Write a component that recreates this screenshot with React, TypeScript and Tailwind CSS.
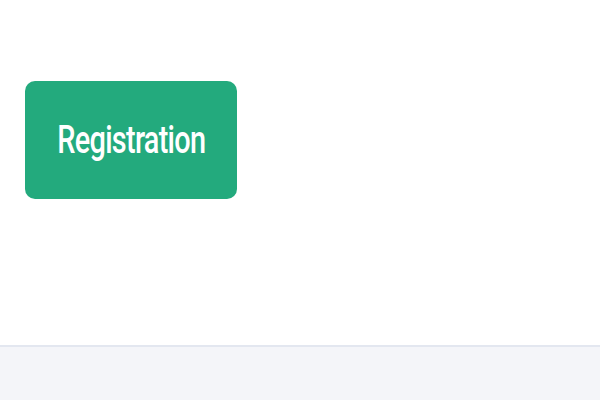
export default function App() {
  return (
    <div className="flex h-[400px] w-[600px] flex-col bg-white font-['Roboto',sans-serif]">
      <div className="flex h-[345px] flex-col">
        <div className="h-[81px]" />
        <div className="pl-[25px]">
          <button className="flex h-[118px] w-[212px] items-center justify-center rounded-[10px] bg-[#23aa7d] text-white">
            <span className="scale-x-[0.76] text-[38px] font-medium leading-none tracking-tight">
              Registration
            </span>
          </button>
        </div>
      </div>
      <div className="flex-1 border-t-2 border-[#e3e7f0] bg-[#f4f5f9]" />
    </div>
  );
}
